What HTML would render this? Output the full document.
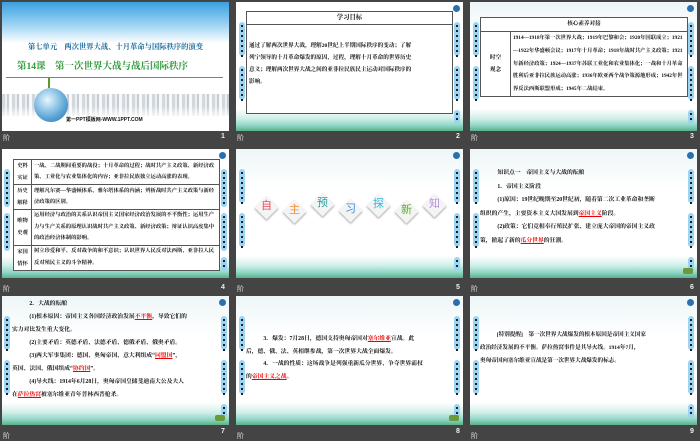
<!DOCTYPE html>
<html><head><meta charset="utf-8"><style>
*{margin:0;padding:0;box-sizing:border-box}
body{width:700px;height:438px;background:#444;position:relative;overflow:hidden;font-family:"Liberation Serif","Noto Serif CJK SC",serif;color:#111}
.s{position:absolute;width:227px;height:129px;background:#fff;overflow:hidden}
.lab{position:absolute;font-size:7px;color:#ddd;font-family:"Liberation Sans","Noto Sans CJK SC",sans-serif}
.num{position:absolute;font-size:7px;color:#eee;font-weight:bold;font-family:"Liberation Sans",sans-serif}
.bg{position:absolute;left:0;right:0;bottom:0;height:22px;background:linear-gradient(180deg,rgba(255,255,255,0) 0%,#cdeee6 45%,#8fd6c6 75%,#5bb08a 100%)}
.sky{position:absolute;left:0;right:0;top:0;height:40px;background:linear-gradient(180deg,#eef6f8,#fff)}
.tab{position:absolute;width:6px;border-radius:3px;background:#9dd4f2}
.tab i{display:block;width:2px;height:2px;background:#123;margin:3px auto 0}
.t{position:absolute;font-size:6.3px;line-height:12px;font-weight:bold;white-space:nowrap}
.r{color:#e00;text-decoration:underline}
.ico{position:absolute;right:3px;top:3px;width:7px;height:7px;border-radius:50%;background:#2a6fb0}
.btn{position:absolute;right:4px;bottom:4px;width:10px;height:6px;background:#6a9a3a;border-radius:2px}
table{position:absolute;border-collapse:collapse;font-size:5.6px;font-weight:bold}
td{border:1px solid #555;padding:0 2px;line-height:9.5px;vertical-align:middle}
</style></head><body>

<!-- slide 1 -->
<div class="s" style="left:2px;top:2px;background:linear-gradient(180deg,#3aa0e0 0%,#9fd4f3 18%,#fff 32%)">
 <div style="position:absolute;left:0;top:40px;width:227px;text-align:center;font-size:7.3px;color:#1a6a9a;font-weight:bold">第七单元　两次世界大战、十月革命与国际秩序的演变</div>
 <div style="position:absolute;left:15px;top:56px;font-size:9.5px;color:#2f9a3a;font-weight:bold">第14课　第一次世界大战与战后国际秩序</div>
 <div style="position:absolute;left:4px;right:6px;top:75px;height:1px;background:#4a8fc8"></div>
 <div style="position:absolute;left:0;right:0;top:92px;height:22px;background:repeating-linear-gradient(90deg,#c8ced4 0 3px,#e8ecef 3px 5px,#b8c0c8 5px 7px,#f4f6f8 7px 10px);opacity:.8"></div>
 <div style="position:absolute;left:0;right:0;top:104px;height:25px;background:linear-gradient(180deg,rgba(255,255,255,0),#fff 50%)"></div>
 <div style="position:absolute;left:32px;top:86px;width:34px;height:34px;border-radius:50%;background:radial-gradient(circle at 40% 35%,#e8f6ff,#5aa6d6 60%,#2a6ea0)"></div>
 <div style="position:absolute;left:46px;top:76px;width:2px;height:10px;background:#5a9a2a"></div>
 <div style="position:absolute;left:64px;top:114px;font-size:5px;font-weight:bold;font-family:'Liberation Sans','Noto Sans CJK SC',sans-serif">第一PPT模板网-WWW.1PPT.COM</div>
</div>
<div class="lab" style="left:3px;top:133px">阶</div><div class="num" style="left:221px;top:133px">1</div>

<!-- slide 2 -->
<div class="s" style="left:236px;top:2px">
 <div class="bg"></div>
 <div class="tab" style="left:3px;top:20px;height:34px"><i></i><i></i><i></i><i></i><i></i><i></i><i></i></div>
 <div class="tab" style="left:3px;top:64px;height:34px"><i></i><i></i><i></i><i></i><i></i><i></i><i></i></div>
 <div class="tab" style="right:3px;top:20px;height:34px"><i></i><i></i><i></i><i></i><i></i><i></i><i></i></div>
 <div class="tab" style="right:3px;top:64px;height:34px"><i></i><i></i><i></i><i></i><i></i><i></i><i></i></div>
 <div class="tab" style="right:3px;top:108px;height:14px"><i></i><i></i></div>
 <div class="ico"></div>
 <div style="position:absolute;left:10px;top:9px;width:207px;height:103px;border:1px solid #555;background:#fff"></div>
 <div style="position:absolute;left:10px;top:22px;width:207px;height:1px;background:#555"></div>
 <div class="t" style="left:10px;top:9px;width:207px;text-align:center;line-height:13px">学习目标</div>
 <div class="t" style="left:13px;top:38px;font-size:5.6px;line-height:12px">通过了解两次世界大战，理解20世纪上半期国际秩序的变动；了解<br>列宁领导的十月革命爆发的原因、过程，理解十月革命的世界历史<br>意义；理解两次世界大战之间的亚非拉民族民主运动对国际秩序的<br>影响。</div>
</div>
<div class="lab" style="left:237px;top:133px">阶</div><div class="num" style="left:456px;top:133px">2</div>

<!-- slide 3 -->
<div class="s" style="left:470px;top:2px">
 <div class="sky"></div><div class="bg"></div>
 <div class="tab" style="left:3px;top:20px;height:34px"><i></i><i></i><i></i><i></i><i></i><i></i><i></i></div>
 <div class="tab" style="left:3px;top:64px;height:34px"><i></i><i></i><i></i><i></i><i></i><i></i><i></i></div>
 <div class="tab" style="right:3px;top:20px;height:34px"><i></i><i></i><i></i><i></i><i></i><i></i><i></i></div>
 <div class="tab" style="right:3px;top:64px;height:34px"><i></i><i></i><i></i><i></i><i></i><i></i><i></i></div>
 <div class="tab" style="right:3px;top:108px;height:14px"><i></i><i></i></div>
 <div class="ico"></div>
 <table style="left:10px;top:15px;width:208px;background:#fff">
  <tr><td colspan="2" style="text-align:center;height:14px">核心素养对接</td></tr>
  <tr><td style="width:30px;text-align:center;line-height:12px">时空<br>观念</td><td style="line-height:12.8px;font-size:5.3px">1914—1918年第一次世界大战；1919年巴黎和会；1920年国联成立；1921—1922年华盛顿会议；1917年十月革命；1918年战时共产主义政策；1921年新经济政策；1924—1937年苏联工业化和农业集体化；一战和十月革命胜利后亚非拉民族运动高涨；1936年欧亚两个战争策源地形成；1942年世界反法西斯联盟形成；1945年二战结束。</td></tr>
 </table>
</div>
<div class="lab" style="left:471px;top:133px">阶</div><div class="num" style="left:690px;top:133px">3</div>

<!-- slide 4 -->
<div class="s" style="left:2px;top:149px">
 <div class="bg"></div>
 <div class="tab" style="left:2px;top:20px;height:38px"><i></i><i></i><i></i><i></i><i></i><i></i><i></i></div>
 <div class="tab" style="left:2px;top:64px;height:38px"><i></i><i></i><i></i><i></i><i></i><i></i><i></i></div>
 <div class="tab" style="right:2px;top:20px;height:38px"><i></i><i></i><i></i><i></i><i></i><i></i><i></i></div>
 <div class="tab" style="right:2px;top:64px;height:38px"><i></i><i></i><i></i><i></i><i></i><i></i><i></i></div>
 <div class="tab" style="right:2px;top:108px;height:14px"><i></i><i></i></div>
 <div class="ico"></div>
 <table style="left:11px;top:10px;width:207px;background:#fff;font-size:5.3px">
  <tr><td style="width:18px;text-align:center;line-height:12px">史料<br>实证</td><td style="line-height:11.5px">一战、二战期间重要的战役；十月革命的过程；战时共产主义政策、新经济政策、工业化与农业集体化的内容；亚非拉民族独立运动高涨的表现。</td></tr>
  <tr><td style="text-align:center;line-height:12px">历史<br>解释</td><td style="line-height:11.5px">理解凡尔赛—华盛顿体系、雅尔塔体系的内涵；辨析战时共产主义政策与新经济政策的区别。</td></tr>
  <tr><td style="text-align:center;line-height:12px">唯物<br>史观</td><td style="line-height:11.5px">运用经济与政治的关系认识帝国主义国家经济政治发展的不平衡性；运用生产力与生产关系的原理认识战时共产主义政策、新经济政策；辩证认识高度集中的政治经济体制的影响。</td></tr>
  <tr><td style="text-align:center;line-height:12px">家国<br>情怀</td><td style="line-height:11.5px">树立珍爱和平、反对战争的和平意识；认识世界人民反对法西斯、亚非拉人民反对殖民主义的斗争精神。</td></tr>
 </table>
</div>
<div class="lab" style="left:3px;top:284px">阶</div><div class="num" style="left:221px;top:284px">4</div>

<!-- slide 5 -->
<div class="s" style="left:236px;top:149px">
 <div class="sky"></div><div class="bg"></div>
 <div class="tab" style="left:3px;top:20px;height:34px"><i></i><i></i><i></i><i></i><i></i><i></i><i></i></div>
 <div class="tab" style="left:3px;top:64px;height:34px"><i></i><i></i><i></i><i></i><i></i><i></i><i></i></div>
 <div class="tab" style="right:3px;top:20px;height:34px"><i></i><i></i><i></i><i></i><i></i><i></i><i></i></div>
 <div class="tab" style="right:3px;top:64px;height:34px"><i></i><i></i><i></i><i></i><i></i><i></i><i></i></div>
 <div class="tab" style="right:3px;top:108px;height:14px"><i></i><i></i></div>
 <div class="ico"></div>
 <div style="position:absolute;left:14px;top:48px;width:200px;height:22px;font-family:'Noto Sans CJK SC',sans-serif;font-size:11px">
  <span style="position:absolute;left:8px;top:2px;width:17px;height:17px;transform:rotate(45deg);background:#f4f4f4;box-shadow:1px 1px 2px #aaa"></span><span style="position:absolute;left:11px;top:0;color:#e74a5a">自</span>
  <span style="position:absolute;left:36px;top:6px;width:17px;height:17px;transform:rotate(45deg);background:#f4f4f4;box-shadow:1px 1px 2px #aaa"></span><span style="position:absolute;left:39px;top:4px;color:#f08a30">主</span>
  <span style="position:absolute;left:64px;top:-1px;width:17px;height:17px;transform:rotate(45deg);background:#f4f4f4;box-shadow:1px 1px 2px #aaa"></span><span style="position:absolute;left:67px;top:-3px;color:#2aa0a0">预</span>
  <span style="position:absolute;left:92px;top:5px;width:17px;height:17px;transform:rotate(45deg);background:#f4f4f4;box-shadow:1px 1px 2px #aaa"></span><span style="position:absolute;left:95px;top:3px;color:#3a8ae0">习</span>
  <span style="position:absolute;left:120px;top:0;width:17px;height:17px;transform:rotate(45deg);background:#f4f4f4;box-shadow:1px 1px 2px #aaa"></span><span style="position:absolute;left:123px;top:-2px;color:#30b8d8">探</span>
  <span style="position:absolute;left:148px;top:6px;width:17px;height:17px;transform:rotate(45deg);background:#f4f4f4;box-shadow:1px 1px 2px #aaa"></span><span style="position:absolute;left:151px;top:4px;color:#5ab030">新</span>
  <span style="position:absolute;left:176px;top:0;width:17px;height:17px;transform:rotate(45deg);background:#f4f4f4;box-shadow:1px 1px 2px #aaa"></span><span style="position:absolute;left:179px;top:-2px;color:#b890e0">知</span>
 </div>
</div>
<div class="lab" style="left:237px;top:284px">阶</div><div class="num" style="left:456px;top:284px">5</div>

<!-- slide 6 -->
<div class="s" style="left:470px;top:149px">
 <div class="sky"></div><div class="bg"></div>
 <div class="tab" style="left:3px;top:20px;height:34px"><i></i><i></i><i></i><i></i><i></i><i></i><i></i></div>
 <div class="tab" style="left:3px;top:64px;height:34px"><i></i><i></i><i></i><i></i><i></i><i></i><i></i></div>
 <div class="tab" style="right:3px;top:20px;height:34px"><i></i><i></i><i></i><i></i><i></i><i></i><i></i></div>
 <div class="tab" style="right:3px;top:64px;height:34px"><i></i><i></i><i></i><i></i><i></i><i></i><i></i></div>
 <div class="tab" style="right:3px;top:108px;height:14px"><i></i><i></i></div>
 <div class="ico"></div><div class="btn"></div>
 <div class="t" style="left:10px;top:18px;font-size:5.8px;line-height:13.5px">　　　知识点一　帝国主义与大战的酝酿<br>　　　1．帝国主义阶段<br>　　　(1)原因：19世纪晚期至20世纪初，随着第二次工业革命和垄断<br>组织的产生，主要资本主义大国发展到<span class="r">帝国主义</span>阶段。<br>　　　(2)政策：它们竞相奉行殖民扩张、建立庞大帝国的帝国主义政<br>策，掀起了新的<span class="r">瓜分世界</span>的狂潮。</div>
</div>
<div class="lab" style="left:471px;top:284px">阶</div><div class="num" style="left:690px;top:284px">6</div>

<!-- slide 7 -->
<div class="s" style="left:2px;top:296px">
 <div class="sky"></div><div class="bg"></div>
 <div class="tab" style="left:2px;top:20px;height:34px"><i></i><i></i><i></i><i></i><i></i><i></i><i></i></div>
 <div class="tab" style="left:2px;top:64px;height:34px"><i></i><i></i><i></i><i></i><i></i><i></i><i></i></div>
 <div class="tab" style="right:2px;top:20px;height:34px"><i></i><i></i><i></i><i></i><i></i><i></i><i></i></div>
 <div class="tab" style="right:2px;top:64px;height:34px"><i></i><i></i><i></i><i></i><i></i><i></i><i></i></div>
 <div class="tab" style="right:2px;top:108px;height:14px"><i></i><i></i></div>
 <div class="ico"></div><div class="btn"></div>
 <div class="t" style="left:10px;top:2px;font-size:5.8px;line-height:13px">　　　2．大战的酝酿<br>　　　(1)根本原因：帝国主义各国经济政治发展<span class="r">不平衡</span>，导致它们的<br>实力对比发生重大变化。<br>　　　(2)主要矛盾：英德矛盾、法德矛盾、德俄矛盾、俄奥矛盾。<br>　　　(3)两大军事集团：德国、奥匈帝国、意大利组成“<span class="r">同盟国</span>”，<br>英国、法国、俄国组成“<span class="r">协约国</span>”。<br>　　　(4)导火线：1914年6月28日，奥匈帝国皇储斐迪南大公及夫人<br>在<span class="r">萨拉热窝</span>被塞尔维亚青年普林西普枪杀。</div>
</div>
<div class="lab" style="left:3px;top:431px">阶</div><div class="num" style="left:221px;top:428px">7</div>

<!-- slide 8 -->
<div class="s" style="left:236px;top:296px">
 <div class="sky"></div><div class="bg"></div>
 <div class="tab" style="left:3px;top:20px;height:34px"><i></i><i></i><i></i><i></i><i></i><i></i><i></i></div>
 <div class="tab" style="left:3px;top:64px;height:34px"><i></i><i></i><i></i><i></i><i></i><i></i><i></i></div>
 <div class="tab" style="right:3px;top:20px;height:34px"><i></i><i></i><i></i><i></i><i></i><i></i><i></i></div>
 <div class="tab" style="right:3px;top:64px;height:34px"><i></i><i></i><i></i><i></i><i></i><i></i><i></i></div>
 <div class="tab" style="right:3px;top:108px;height:14px"><i></i><i></i></div>
 <div class="ico"></div><div class="btn"></div>
 <div class="t" style="left:10px;top:37px;font-size:5.8px;line-height:12.5px">　　　3．爆发：7月28日，德国支持奥匈帝国对<span class="r">塞尔维亚</span>宣战。此<br>后，德、俄、法、英相继参战，第一次世界大战全面爆发。<br>　　　4．一战的性质：这场战争是列强重新瓜分世界、争夺世界霸权<br>的<span class="r">帝国主义之战</span>。</div>
</div>
<div class="lab" style="left:237px;top:431px">阶</div><div class="num" style="left:456px;top:428px">8</div>

<!-- slide 9 -->
<div class="s" style="left:470px;top:296px">
 <div class="sky"></div><div class="bg"></div>
 <div class="tab" style="left:3px;top:20px;height:34px"><i></i><i></i><i></i><i></i><i></i><i></i><i></i></div>
 <div class="tab" style="left:3px;top:64px;height:34px"><i></i><i></i><i></i><i></i><i></i><i></i><i></i></div>
 <div class="tab" style="right:3px;top:20px;height:34px"><i></i><i></i><i></i><i></i><i></i><i></i><i></i></div>
 <div class="tab" style="right:3px;top:64px;height:34px"><i></i><i></i><i></i><i></i><i></i><i></i><i></i></div>
 <div class="tab" style="right:3px;top:108px;height:14px"><i></i><i></i></div>
 <div class="ico"></div>
 <div class="t" style="left:10px;top:33px;font-size:5.6px;line-height:13px">　　　[特别提醒]　第一次世界大战爆发的根本原因是帝国主义国家<br>政治经济发展的不平衡。萨拉热窝事件是其导火线。1914年7月，<br>奥匈帝国向塞尔维亚宣战是第一次世界大战爆发的标志。</div>
</div>
<div class="lab" style="left:471px;top:431px">阶</div><div class="num" style="left:690px;top:428px">9</div>

</body></html>
